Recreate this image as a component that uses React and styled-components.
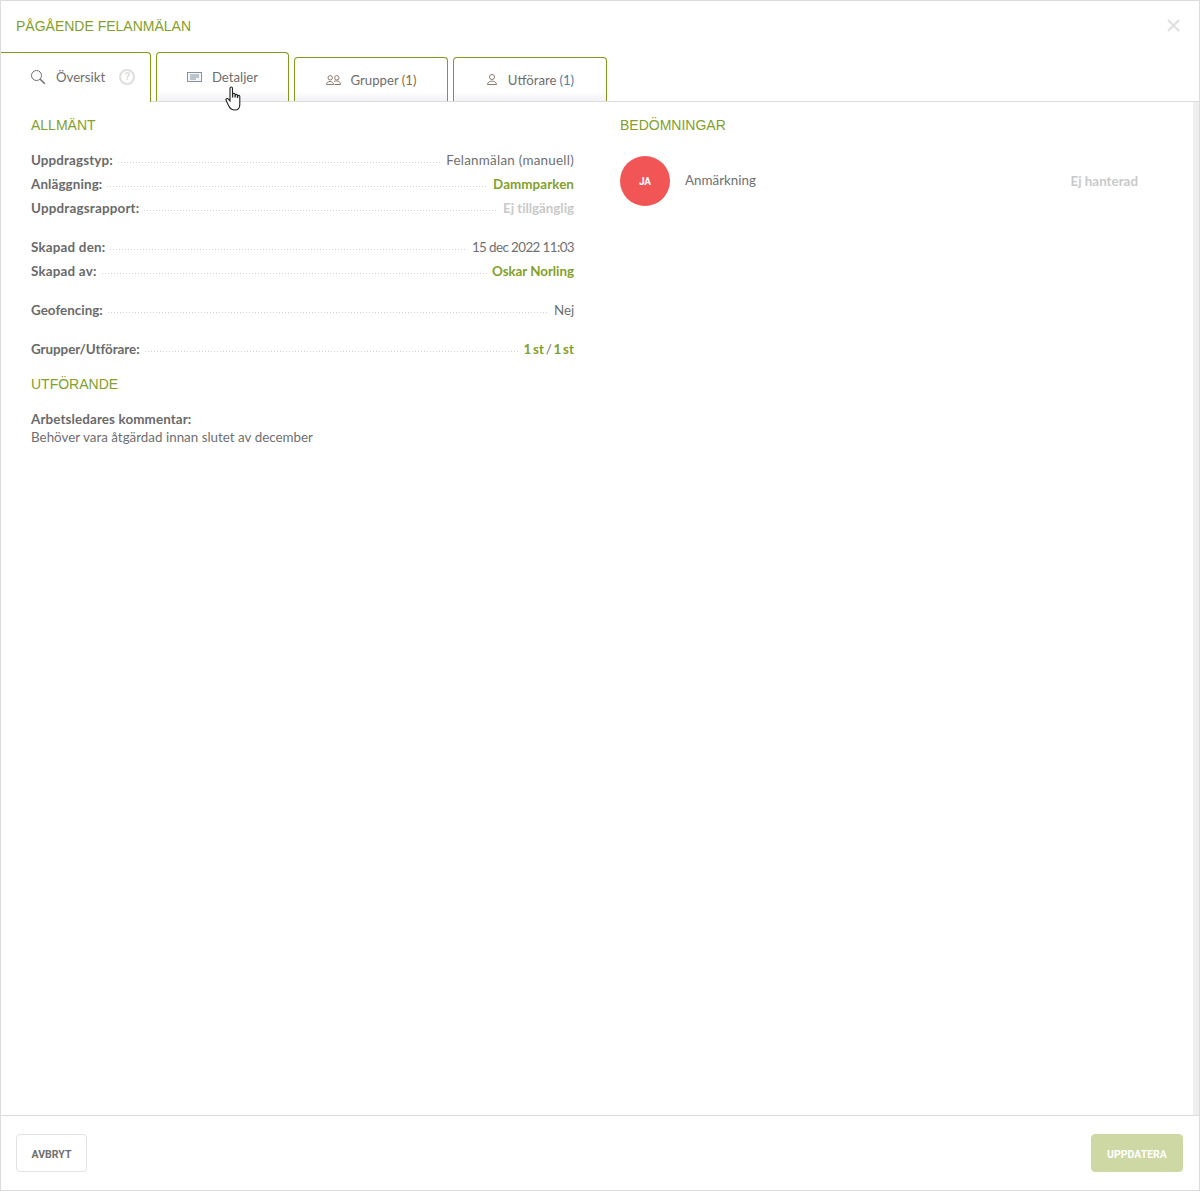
import React from "react";
import styled, { createGlobalStyle } from "styled-components";

const Global = createGlobalStyle`
  html, body { margin: 0; padding: 0; background: #fff; }
  * { box-sizing: border-box; }
  body { font-family: "Lato", "Noto Sans", sans-serif; color: #6f6f6f; }
`;

const GREEN = "#83a02a";
const Modal = styled.div`
  width: 1200px; height: 1191px; display: flex; flex-direction: column;
  border: 1px solid #dcdcdc; background: #fff; overflow: hidden;
`;
const Header = styled.header`
  height: 51px; flex: none; display: flex; align-items: center; justify-content: space-between;
  padding: 0 19px 2px 15px;
`;
const Title = styled.h1`
  margin: 0; font: 400 14px "Liberation Sans", sans-serif; color: ${GREEN};
`;
const Close = styled.span`
  display: flex; color: #dedede;
`;
const TabBar = styled.nav`
  flex: none; height: 50px; display: flex; align-items: flex-end; gap: 5px;
  border-bottom: 1px solid #dcdcdc; margin-left: -1px;
`;
const Tab = styled.div`
  position: relative; height: ${p => (p.$tall ? 49 : 44)}px; width: ${p => p.$w}px;
  display: flex; align-items: center; justify-content: ${p => (p.$active ? "flex-start" : "center")};
  padding: ${p => (p.$active ? "0 0 0 30px" : "0")};
  gap: 10px; border: 1px solid #7f9c1c; border-bottom: 0; border-radius: 4px 4px 0 0;
  background: ${p => (p.$active ? "#fff" : "linear-gradient(#fff 78%, #f2f2f7 100%)")};
  font-size: 13.2px; color: #6e6e6e;
  ${p => p.$active && `height: 50px; margin-bottom: -1px; border-top-left-radius: 0; border-left: 0; padding-bottom: 1px;`}
`;
const Count = styled.span`
  color: ${p => p.$c}; margin-left: 3px;
`;
const Help = styled.span`
  width: 16px; height: 16px; border: 2px solid #dedede; border-radius: 50%; color: #dcdcdc;
  font: 700 10px/12px "Liberation Sans", sans-serif; text-align: center; margin-left: 4px;
`;
const Cursor = styled.svg`
  position: absolute; left: 68px; top: 33px;
`;
const Body = styled.main`
  flex: 1; min-height: 0; display: flex; position: relative; padding: 0 30px; gap: 46px;
`;
const Track = styled.div`
  position: absolute; top: 0; right: 0; bottom: 0; width: 6px; background: #eeeeee;
`;
const Left = styled.section`
  width: 543px; flex: none; padding-top: 15px;
`;
const Right = styled.section`
  flex: 1; padding-top: 15px;
`;
const Heading = styled.h2`
  margin: 0; font: 400 14px/16px "Liberation Sans", sans-serif; color: ${GREEN};
`;
const Group = styled.div`
  margin-top: ${p => p.$mt ?? 15}px; display: flex; flex-direction: column;
`;
const Row = styled.div`
  height: 24px; display: flex; align-items: center; font-size: 13.4px; gap: 5px;
`;
const Label = styled.span`
  font-weight: 700; color: #6a6a6a; letter-spacing: ${p => p.$ls || "0.12px"};
`;
const Dots = styled.span`
  flex: 1; height: 1px; margin-top: 5px;
  background-image: repeating-linear-gradient(90deg, #d2d2d2 0 1px, transparent 1px 3px);
`;
const Value = styled.span`
  color: ${p => p.$c || "#6f6f6f"}; font-weight: ${p => (p.$b ? 700 : 400)};
  letter-spacing: ${p => p.$ls || "0.1px"}; word-spacing: ${p => p.$ws || "0"};
`;
const Comment = styled.div`
  margin-top: 18px; font-size: 13.4px; line-height: 18px;
`;
const Assessment = styled.div`
  margin-top: 23px; display: flex; align-items: center; height: 50px; font-size: 13.4px;
`;
const Avatar = styled.span`
  width: 50px; height: 50px; border-radius: 50%; background: #f25555; color: #fff;
  display: flex; align-items: center; justify-content: center; font: 700 10px Roboto, sans-serif; flex: none;
`;
const AName = styled.span`
  margin-left: 15px; flex: 1; margin-bottom: 3px;
`;
const AStatus = styled.span`
  margin-right: 31px; color: #c9c9c9; font-weight: 700;
`;
const Footer = styled.footer`
  flex: none; height: 75px; border-top: 1px solid #dcdcdc; display: flex; align-items: center;
  justify-content: space-between; padding: 0 16px 0 15px;
`;
const Button = styled.button`
  height: 38px; width: ${p => p.$w}px; border-radius: 4px; font: 700 10.5px Roboto, sans-serif;
  padding: 2px 0 0;
  background: ${p => (p.$primary ? "#cdd8a4" : "#fff")};
  color: ${p => (p.$primary ? "#fff" : "#6f6f6f")};
  border: 1px solid ${p => (p.$primary ? "#cdd8a4" : "#e2e2e2")};
`;

const I = ({ children, w = 16 }) => (
  <svg width={w} height={w} viewBox="0 0 16 16" fill="none" stroke="currentColor" strokeWidth="1">{children}</svg>
);

export default function App() {
  return (
    <>
      <Global />
      <Modal>
        <Header>
          <Title>PÅGÅENDE FELANMÄLAN</Title>
          <Close>
            <svg width="13" height="13" viewBox="0 0 13 13" stroke="currentColor" strokeWidth="1.8"><path d="M1 1l11 11M12 1L1 12" /></svg>
          </Close>
        </Header>
        <TabBar>
          <Tab $active $tall $w={151}>
            <I><circle cx="6.5" cy="6.5" r="5" /><path d="M10.2 10.2l4.6 4.6" strokeWidth="1.5" /></I>
            Översikt
            <Help>?</Help>
          </Tab>
          <Tab $tall $w={133}>
            <svg width="15" height="10" viewBox="0 0 15 10" fill="none" stroke="#8794a0"><rect x="0.5" y="0.5" width="14" height="9" fill="#f3f5f7" /><path d="M3 3h9M3 5h9M3 7h6" /></svg>
            Detaljer
            <Cursor width="18" height="26" viewBox="0 0 18 26" fill="#fff" stroke="#222" strokeWidth="1.1">
              <path d="M5 2.5c0-2 2.5-2 2.5 0V11h.2V8.5c0-1.6 2.3-1.6 2.3 0V11h.2V9.5c0-1.5 2.2-1.5 2.2 0V11.5h.2V10.500c0-1.500 2.200-1.500 2.200 0v8c0 3-1.500 5.500-5 5.500-3 0-4.500-1-6-4L1.200 14.500c-1-1.700 1-2.800 2.300-1.300L5 15z" />
            </Cursor>
          </Tab>
          <Tab $w={154}>
            <svg width="15" height="10" viewBox="0 0 15 10" fill="none" stroke="#8d7b6e"><circle cx="4.200" cy="2.800" r="2.200" /><circle cx="10.800" cy="2.800" r="2.200" /><path d="M.5 9.500c0-4 7-4 7 0zM8 6.500c2-1.200 6.500-.8 6.500 3h-6" /></svg>
            <span>Grupper<Count $c="#8d6b3c">(1)</Count></span>
          </Tab>
          <Tab $w={154}>
            <svg width="12" height="11" viewBox="0 0 12 11" fill="none" stroke="#8d7b6e"><circle cx="6" cy="3" r="2.500" /><path d="M1.500 10.500c0-4.500 9-4.500 9 0z" /></svg>
            <span>Utförare<Count $c="#4f7ea8">(1)</Count></span>
          </Tab>
        </TabBar>
        <Body>
          <Left>
            <Heading>ALLMÄNT</Heading>
            <Group>
              <Row><Label>Uppdragstyp:</Label><Dots /><Value $ls="0.25px">Felanmälan (manuell)</Value></Row>
              <Row><Label>Anläggning:</Label><Dots /><Value $c={GREEN} $b $ls="0.08px">Dammparken</Value></Row>
              <Row><Label $ls="0.2px">Uppdragsrapport:</Label><Dots /><Value $c="#c9c9c9" $b $ls="-0.05px">Ej tillgänglig</Value></Row>
            </Group>
            <Group>
              <Row><Label $ls="0.2px">Skapad den:</Label><Dots /><Value $ls="-0.6px">15 dec 2022 11:03</Value></Row>
              <Row><Label $ls="0.2px">Skapad av:</Label><Dots /><Value $c={GREEN} $b $ls="-0.05px">Oskar Norling</Value></Row>
            </Group>
            <Group>
              <Row><Label $ls="0.02px">Geofencing:</Label><Dots /><Value $ls="-0.1px">Nej</Value></Row>
            </Group>
            <Group>
              <Row><Label $ls="-0.05px">Grupper/Utförare:</Label><Dots /><Value $c={GREEN} $b $ws="-1.5px" $ls="0">1 st <Value>/</Value> 1 st</Value></Row>
            </Group>
            <Group $mt={15}><Heading>UTFÖRANDE</Heading></Group>
            <Comment>
              <Label>Arbetsledares kommentar:</Label><br />
              Behöver vara åtgärdad innan slutet av december
            </Comment>
          </Left>
          <Right>
            <Heading>BEDÖMNINGAR</Heading>
            <Assessment>
              <Avatar>JA</Avatar>
              <AName>Anmärkning</AName>
              <AStatus>Ej hanterad</AStatus>
            </Assessment>
          </Right>
          <Track />
        </Body>
        <Footer>
          <Button $w={71}>AVBRYT</Button>
          <Button $primary $w={92}>UPPDATERA</Button>
        </Footer>
      </Modal>
    </>
  );
}
